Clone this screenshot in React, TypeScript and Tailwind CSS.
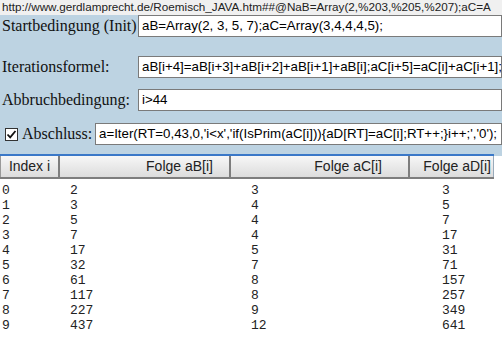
import React from "react";

const rows = [
  ["0", "2", "3", "3"],
  ["1", "3", "4", "5"],
  ["2", "5", "4", "7"],
  ["3", "7", "4", "17"],
  ["4", "17", "5", "31"],
  ["5", "32", "7", "71"],
  ["6", "61", "8", "157"],
  ["7", "117", "8", "257"],
  ["8", "227", "9", "349"],
  ["9", "437", "12", "641"],
];

const serif = "font-['Liberation_Serif',serif] text-[16px] text-[#111]";
const field =
  "h-[22px] flex-1 bg-white border border-[#7a7a7a] pl-[3px] text-[13.3px] leading-[20px] font-['Liberation_Sans',Arial,sans-serif] text-black whitespace-nowrap overflow-hidden";

export default function App() {
  return (
    <div className="w-[502px] h-[339px] overflow-hidden bg-[#bdd3e2] font-['Liberation_Sans',Arial,sans-serif]">
      {/* address line */}
      <div className="h-[15px] bg-[#f0f0f0] pl-[2px] text-[11.7px] leading-[14px] text-[#222] whitespace-nowrap">
        http://www.gerdlamprecht.de/Roemisch_JAVA.htm##@NaB=Array(2,%203,%205,%207);aC=A
      </div>

      <div className="flex items-center h-[22px]">
        <span className={`w-[138px] shrink-0 pl-[2px] whitespace-nowrap ${serif}`}>Startbedingung (Init)</span>
        <div className={field}>aB=Array(2, 3, 5, 7);aC=Array(3,4,4,4,5);</div>
      </div>

      <div className="flex items-center h-[23px] mt-[18px]">
        <span className={`w-[138px] shrink-0 pl-[2px] ${serif}`}>Iterationsformel:</span>
        <div className={field}>aB[i+4]=aB[i+3]+aB[i+2]+aB[i+1]+aB[i];aC[i+5]=aC[i]+aC[i+1];</div>
      </div>

      <div className="flex items-center h-[22px] mt-[11px]">
        <span className={`w-[138px] shrink-0 pl-[2px] ${serif}`}>Abbruchbedingung:</span>
        <div className={field}>i&gt;44</div>
      </div>

      <div className="flex items-center h-[22px] mt-[12px]">
        <span className="ml-[5px] w-[13px] h-[13px] shrink-0 bg-white border border-[#333] flex items-center justify-center">
          <svg width="11" height="11" viewBox="0 0 11 11">
            <path d="M1.5 5.5 L4.2 8.3 L9.5 2" fill="none" stroke="#111" strokeWidth="1.8" />
          </svg>
        </span>
        <span className={`w-[77px] shrink-0 pl-[4px] ${serif}`}>Abschluss:</span>
        <div className={field}>a=Iter(RT=0,43,0,'i&lt;x','if(IsPrim(aC[i])){"{"}aD[RT]=aC[i];RT++;{"}"}i++;','0');</div>
      </div>

      <div className="mt-[9px] w-[494px] h-[2px] bg-[#3a78c8]" />

      <div className="bg-white h-[200px]">
        <div className="flex h-[23px] w-[494px] bg-gradient-to-b from-[#f7f7f7] to-[#dcdcdc] border-b-2 border-[#7d7d7d] text-[14px] leading-[21px] text-[#222]">
          <div className="w-[60px] border-l border-[#999] border-r-2 border-r-[#7d7d7d] text-center">Index i</div>
          <div className="w-[171px] border-r-2 border-[#7d7d7d] text-right pr-[16px]">Folge aB[i]</div>
          <div className="w-[179px] border-r-2 border-[#7d7d7d] text-right pr-[26px]">Folge aC[i]</div>
          <div className="flex-1 text-right pr-[2px] border-r border-[#9ab]">Folge aD[i]</div>
        </div>
        <div className="pt-[4px] font-['Liberation_Mono',monospace] text-[13px] leading-[15px] text-[#222]">
          {rows.map((r) => (
            <div key={r[0]} className="flex h-[15px]">
              <span className="w-[70px] pl-[2px]">{r[0]}</span>
              <span className="w-[181px]">{r[1]}</span>
              <span className="w-[191px]">{r[2]}</span>
              <span>{r[3]}</span>
            </div>
          ))}
        </div>
      </div>
    </div>
  );
}
